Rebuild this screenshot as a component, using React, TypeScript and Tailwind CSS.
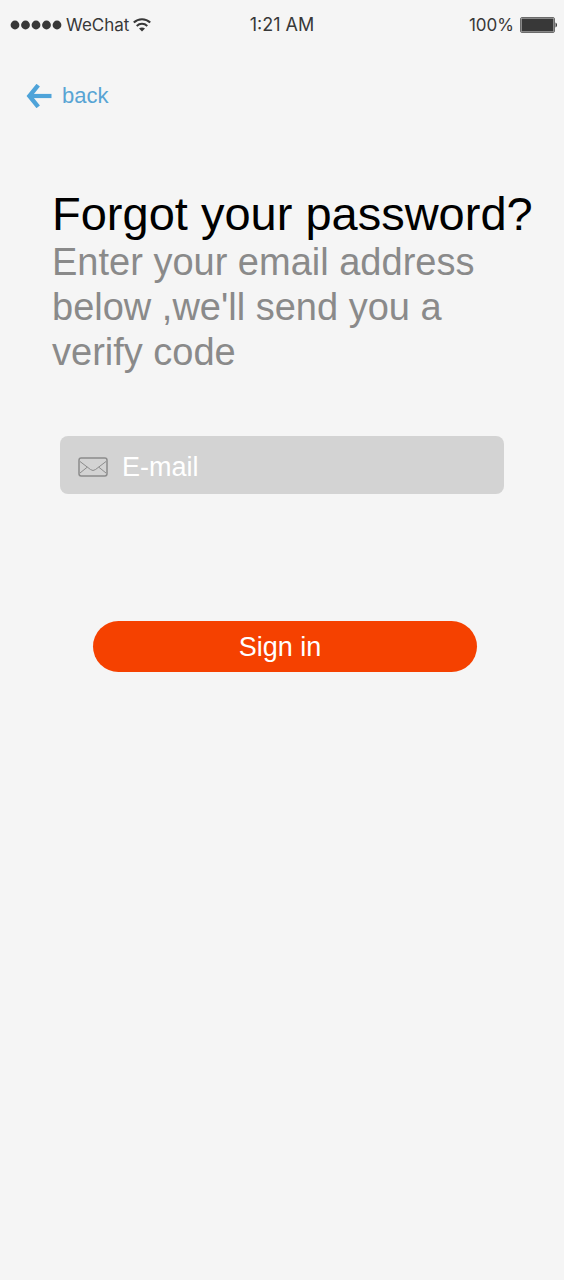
function SignalDots() {
  return (
    <svg className="h-[10px] w-[52px]" viewBox="0 0 52 10" fill="#383838" aria-hidden="true">
      {[5, 15.5, 26, 36.5, 47].map((cx) => (
        <circle key={cx} cx={cx} cy="5" r="4.4" />
      ))}
    </svg>
  );
}

function WifiIcon() {
  return (
    <svg className="h-[14px] w-[18px]" viewBox="0 0 18 14" fill="none" stroke="#383838" aria-hidden="true">
      <path d="M0.8 4.6C5.4 0.1 12.6 0.1 17.2 4.6" strokeWidth="2.1" />
      <path d="M3.7 7.9C6.8 5 11.2 5 14.3 7.9" strokeWidth="2" />
      <path d="M6 10.6C7.7 9 10.3 9 12 10.6L9 13.6Z" fill="#383838" stroke="none" />
    </svg>
  );
}

function BatteryIcon() {
  return (
    <svg className="h-[16px] w-[38px]" viewBox="0 0 38 16" aria-hidden="true">
      <rect x="0.5" y="0.5" width="34" height="15" rx="1.5" fill="#d8d8d8" stroke="#6b6b6b" />
      <rect x="1.5" y="1.5" width="32" height="13" rx="0.5" fill="#383838" />
      <path d="M35.5 5.5C37.5 6.2 37.5 9.8 35.5 10.5Z" fill="#383838" />
    </svg>
  );
}

function BackArrow() {
  return (
    <svg className="h-[24px] w-[26px]" viewBox="0 0 26 24" fill="none" stroke="#4ea3d9" aria-hidden="true">
      <path d="M12.2 1.2L3.4 12L12.2 22.8" strokeWidth="4.4" />
      <path d="M3.4 12H25.5" strokeWidth="4.2" />
    </svg>
  );
}

function MailIcon() {
  return (
    <svg className="h-[20px] w-[30px] shrink-0" viewBox="0 0 30 20" fill="none" stroke="#8c8c8c" aria-hidden="true">
      <rect x="1" y="1" width="28" height="18" rx="2.2" strokeWidth="1.5" />
      <path d="M2 4.5L12.6 12.6Q15 14.4 17.4 12.6L28 4.5" strokeWidth="1" />
      <path d="M2 16L9.2 10.2M28 16L20.8 10.2" strokeWidth="1" />
    </svg>
  );
}

export default function App() {
  return (
    <div className="min-h-screen bg-[#f5f5f5] font-['Liberation_Sans',Arial,sans-serif]">
      <header className="grid grid-cols-3 items-center px-[10px] pt-[13px] font-[Inter,sans-serif] text-[17px] leading-[24px] text-[#383838]">
        <div className="flex items-center gap-1">
          <SignalDots />
          <span>WeChat</span>
          <WifiIcon />
        </div>
        <time className="text-center text-[18px]">1:21 AM</time>
        <div className="-mr-[4px] flex items-center justify-end gap-[6px]">
          <span>100%</span>
          <BatteryIcon />
        </div>
      </header>

      <nav className="flex px-[26px] pt-[46px]">
        <a href="#back" className="flex items-center gap-[10px] text-[22px] leading-[26px] text-[#58a4d4]">
          <BackArrow />
          <span>back</span>
        </a>
      </nav>

      <main>
        <div className="pt-[79px] pl-[52px]">
          <h1 className="text-[47px] leading-[52px] text-black">Forgot your password?</h1>
          <p className="pr-[60px] text-[38px] leading-[45px] text-[#8a8a8a]">
            Enter your email address below ,we'll send you a verify code
          </p>
        </div>

        <form className="px-[60px] pt-[61px]" onSubmit={(event) => event.preventDefault()}>
          <div className="flex h-[58px] items-center gap-[14px] rounded-lg bg-[#d3d3d3] px-[18px] pt-[3px]">
            <label htmlFor="email">
              <MailIcon />
            </label>
            <input
              id="email"
              type="email"
              aria-label="E-mail"
              placeholder="E-mail"
              className="min-w-0 flex-1 bg-transparent text-[27px] leading-[32px] text-white outline-none placeholder:text-white"
            />
          </div>
          <div className="pt-[127px] pr-[27px] pl-[33px]">
            <button type="submit" className="h-[51px] w-full rounded-full bg-[#f54100] pr-[10px] text-[27px] leading-[32px] text-white">
              Sign in
            </button>
          </div>
        </form>
      </main>
    </div>
  );
}
